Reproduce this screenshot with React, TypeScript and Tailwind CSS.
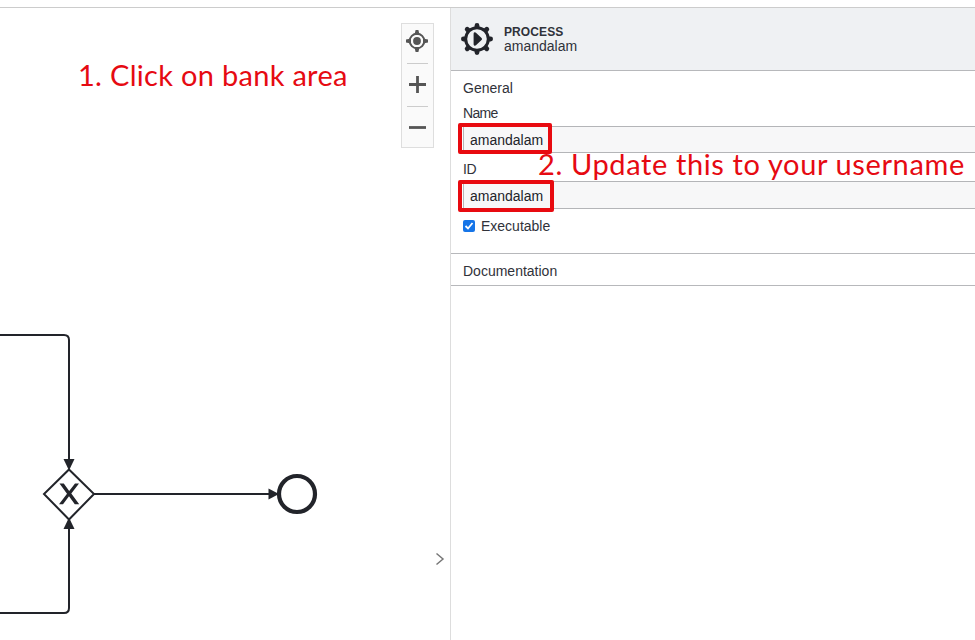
import React from "react";

function Diagram() {
  return (
    <svg className="absolute inset-0 h-full w-full" viewBox="0 0 450 632" fill="none" stroke="#22242a" strokeWidth="2">
      <path d="M0 327H64Q69 327 69 332V452" />
      <path d="M0 605H64Q69 605 69 600V520" />
      <path d="M94 486H269" />
      <g fill="#22242a" stroke="none">
        <path d="M63.500 451H74.500L69 462.500Z" />
        <path d="M63.500 521H74.500L69 509.500Z" />
        <path d="M268.500 480.500V491.500L279 486Z" />
      </g>
      <path d="M69 461.500L94 486L69 511.500L44 486Z" fill="#fff" />
      <path d="M59.500 475.500H63.800L69.200 483L75 475.500H79L71.300 485.500L79.200 496.300H74.800L69 488.300L63 496.300H59L67 485.700Z" fill="#22242a" stroke="none" />
      <circle cx="297" cy="486" r="18" strokeWidth="4.200" />
    </svg>
  );
}

function ZoomControls() {
  return (
    <div className="absolute left-[401px] top-[15px] flex h-[125px] w-[33px] flex-col items-center border border-[#dedede] bg-[#fafafa] px-[5px]">
      <button className="flex h-[40px] w-full items-center justify-center border-b border-[#cccccc] pb-[5px]">
        <svg width="22" height="22" viewBox="0 0 22 22" className="shrink-0 -translate-x-px" fill="none" stroke="#555" strokeWidth="2">
          <circle cx="11" cy="11" r="7.300" />
          <circle cx="11" cy="11" r="3.900" fill="#555" stroke="none" />
          <path d="M9.600 0H12.400L13.600 5H8.400ZM9.600 22H12.400L13.600 17H8.400ZM0 9.600V12.400L5 13.600V8.400ZM22 9.600V12.400L17 13.600V8.400Z" fill="#555" stroke="none" />
        </svg>
      </button>
      <button className="flex h-[43px] w-full items-center justify-center border-b border-[#cccccc] pb-[2px]">
        <svg width="17" height="17" viewBox="0 0 17 17" stroke="#555" strokeWidth="2.800"><path d="M8.500 0V17M0 8.500H17" /></svg>
      </button>
      <button className="flex h-[40px] w-full items-center justify-center">
        <svg width="17" height="17" viewBox="0 0 17 17" stroke="#555" strokeWidth="2.800"><path d="M0 8.500H17" /></svg>
      </button>
    </div>
  );
}

function ProcessIcon() {
  return (
    <svg width="32" height="32" viewBox="0 0 32 32" className="shrink-0">
      <g stroke="#22242a" strokeWidth="4.800" strokeLinecap="round">
        <path d="M16 2.400V6M16 26V29.600M2.400 16H6M26 16H29.600M6.200 6.200L9 9M23 23L25.800 25.800M25.800 6.200L23 9M9 23L6.200 25.800" />
      </g>
      <circle cx="16" cy="16" r="11.300" fill="#eff1f3" stroke="#22242a" strokeWidth="3" />
      <path d="M14 10.700L19.600 16L14 21.300Z" fill="#22242a" stroke="#22242a" strokeWidth="2.800" strokeLinejoin="round" />
    </svg>
  );
}

function Field({ value, short = false }: { value: string; short?: boolean }) {
  return (
    <div className={`relative ml-3 flex items-center border-y border-l border-[#b4b5b8] bg-[#f7f7f8] pl-[6px] pt-px text-sm text-[#22242a] ${short ? "h-[27px]" : "h-[28px]"}`}>
      {value}
      <span className={`absolute -left-[6px] rounded-[2px] border-4 border-[#e80a10] ${short ? "-top-[4px] h-[31px] w-[94px]" : "-top-[2px] h-[32px] w-[96px]"}`} />
    </div>
  );
}

export default function App() {
  return (
    <div className="relative flex h-[640px] w-[975px] flex-col overflow-hidden bg-white font-['Liberation_Sans',sans-serif] text-[#30323a]">
      <div className="h-2 shrink-0 border-b border-[#cccccc]" />
      <div className="flex min-h-0 flex-1">
        <main className="relative w-[450px] shrink-0">
          <Diagram />
          <ZoomControls />
          <svg className="absolute left-[435px] top-[544px]" width="10" height="14" viewBox="0 0 10 14" fill="none" stroke="#777" strokeWidth="1.500"><path d="M1.500 1.500L8 7L1.500 12.500" /></svg>
          <div className="absolute left-[78px] top-[49px] whitespace-nowrap font-[Lato,sans-serif] text-[29px] leading-[36px] tracking-[0.3px] text-[#e60a12]">1. Click on bank area</div>
        </main>
        <aside className="relative min-w-0 flex-1 border-l border-[#dddddd]">
          <header className="flex h-[63px] items-center gap-[11px] border-b border-[#b7b8bb] bg-[#eff1f3] pl-[10px]">
            <ProcessIcon />
            <div className="text-sm leading-[15px]">
              <div className="relative top-px text-[12px] font-bold tracking-[0.1px]">PROCESS</div>
              <div>amandalam</div>
            </div>
          </header>
          <section className="h-[183px] border-b border-[#b7b8bb]">
            <h2 className="h-[34px] pl-3 text-sm leading-[34px]">General</h2>
            <div className="h-[21px] pl-3 text-sm leading-[17px] tracking-[-0.7px]">Name</div>
            <Field value="amandalam" short />
            <div className="h-[28px] pl-3 text-sm leading-[32px] tracking-[-0.5px]">ID</div>
            <Field value="amandalam" />
            <label className="flex h-[34px] items-center gap-[6px] pl-3 text-sm">
              <span className="flex h-3 w-3 items-center justify-center rounded-[2px] bg-[#1675e8]">
                <svg width="10" height="10" viewBox="0 0 10 10" fill="none" stroke="white" strokeWidth="1.800"><path d="M1.500 5L4 7.500L8.500 2" /></svg>
              </span>
              Executable
            </label>
          </section>
          <section className="h-[32px] border-b border-[#b7b8bb] pl-3 text-sm leading-[35px]">Documentation</section>
          <div className="absolute left-[87px] top-[138px] whitespace-nowrap font-[Lato,sans-serif] text-[29px] leading-[36px] tracking-[0.62px] text-[#e60a12]">2. Update this to your username</div>
        </aside>
      </div>
    </div>
  );
}
